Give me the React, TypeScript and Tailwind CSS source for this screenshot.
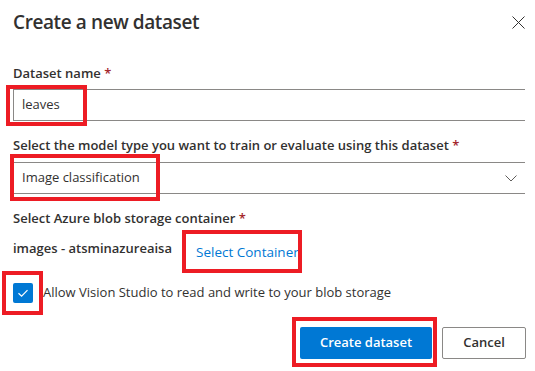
import React from 'react';

// red annotation frame drawn over a control
const Mark: React.FC<{ className: string }> = ({ className }) => (
  <span className={`pointer-events-none absolute border-[4px] border-[#ed1c24] ${className}`} />
);

const Label: React.FC<{ text: string; className?: string }> = ({ text, className = '' }) => (
  <div className={`text-[13px] font-semibold leading-[20px] text-[#323130] ${className}`}>
    {text} <span className="text-[#a4262c]">*</span>
  </div>
);

export default function App() {
  return (
    <div className="w-[535px] h-[371px] overflow-hidden bg-white font-['Open_Sans',sans-serif] text-[#323130]">
      <div className="flex h-[44px] items-center justify-between pl-[13px] pr-[10px]">
        <h2 className="text-[19px] font-semibold leading-[28px] tracking-[-0.4px]">Create a new dataset</h2>
        <svg width="13" height="13" viewBox="0 0 13 13" className="text-[#323130]">
          <path d="M0.5 0.5 L12.5 12.5 M12.5 0.5 L0.5 12.5" stroke="currentColor" strokeWidth="1" fill="none" />
        </svg>
      </div>

      <div className="pl-[13px] pr-[10px]">
        <Label text="Dataset name" className="mt-[19px]" />
        <div className="relative mt-[6px] flex h-[32px] items-center border-y border-l border-[#8a8886] pl-[8px] text-[13px]">
          leaves
          <Mark className="-left-[8px] -top-[5px] h-[41px] w-[81px]" />
        </div>

        <Label text="Select the model type you want to train or evaluate using this dataset" className="mt-[14px]" />
        <div className="relative mt-[7px] flex h-[32px] items-center justify-between border-y border-l border-[#8a8886] pl-[8px] pr-[8px] text-[13px]">
          <span>Image classification</span>
          <svg width="12" height="7" viewBox="0 0 12 7" className="text-[#605e5c]">
            <path d="M0.5 0.5 L6 6 L11.5 0.5" stroke="currentColor" strokeWidth="1" fill="none" />
          </svg>
          <Mark className="-left-[4px] -top-[9px] h-[47px] w-[150px]" />
        </div>

        <Label text="Select Azure blob storage container" className="mt-[14px]" />
        <div className="mt-[8px] flex h-[32px] items-center">
          <span className="mb-[6px] whitespace-nowrap text-[13px] font-semibold">images - atsminazureaisa</span>
          <button className="relative ml-[20px] h-[32px] shrink-0 whitespace-nowrap px-[4px] text-[13.5px] text-[#0078d4]">
            Select Container
            <Mark className="-left-[10px] -top-[6px] h-[43px] w-[120px]" />
          </button>
        </div>

        <div className="mt-[15px] flex h-[20px] items-center">
          <span className="relative flex h-[20px] w-[20px] items-center justify-center rounded-[2px] bg-[#0078d4]">
            <svg width="12" height="12" viewBox="0 0 12 12">
              <path d="M1.5 6.2 L4.6 9.2 L10.5 3.2" stroke="white" strokeWidth="1.2" fill="none" />
            </svg>
            <Mark className="-left-[11px] -top-[12px] h-[44px] w-[41px]" />
          </span>
          <span className="ml-[10px] text-[13px]">Allow Vision Studio to read and write to your blob storage</span>
        </div>
      </div>

      <div className="mt-[24px] flex justify-end gap-[10px] pr-[9px]">
        <button className="relative h-[32px] w-[132px] rounded-[2px] bg-[#0078d4] text-[13px] font-semibold text-white">
          Create dataset
          <Mark className="-left-[8px] -top-[10px] h-[50px] w-[145px]" />
        </button>
        <button className="h-[32px] w-[84px] rounded-[2px] border border-[#8a8886] bg-white text-[13px] font-semibold">
          Cancel
        </button>
      </div>
    </div>
  );
}
